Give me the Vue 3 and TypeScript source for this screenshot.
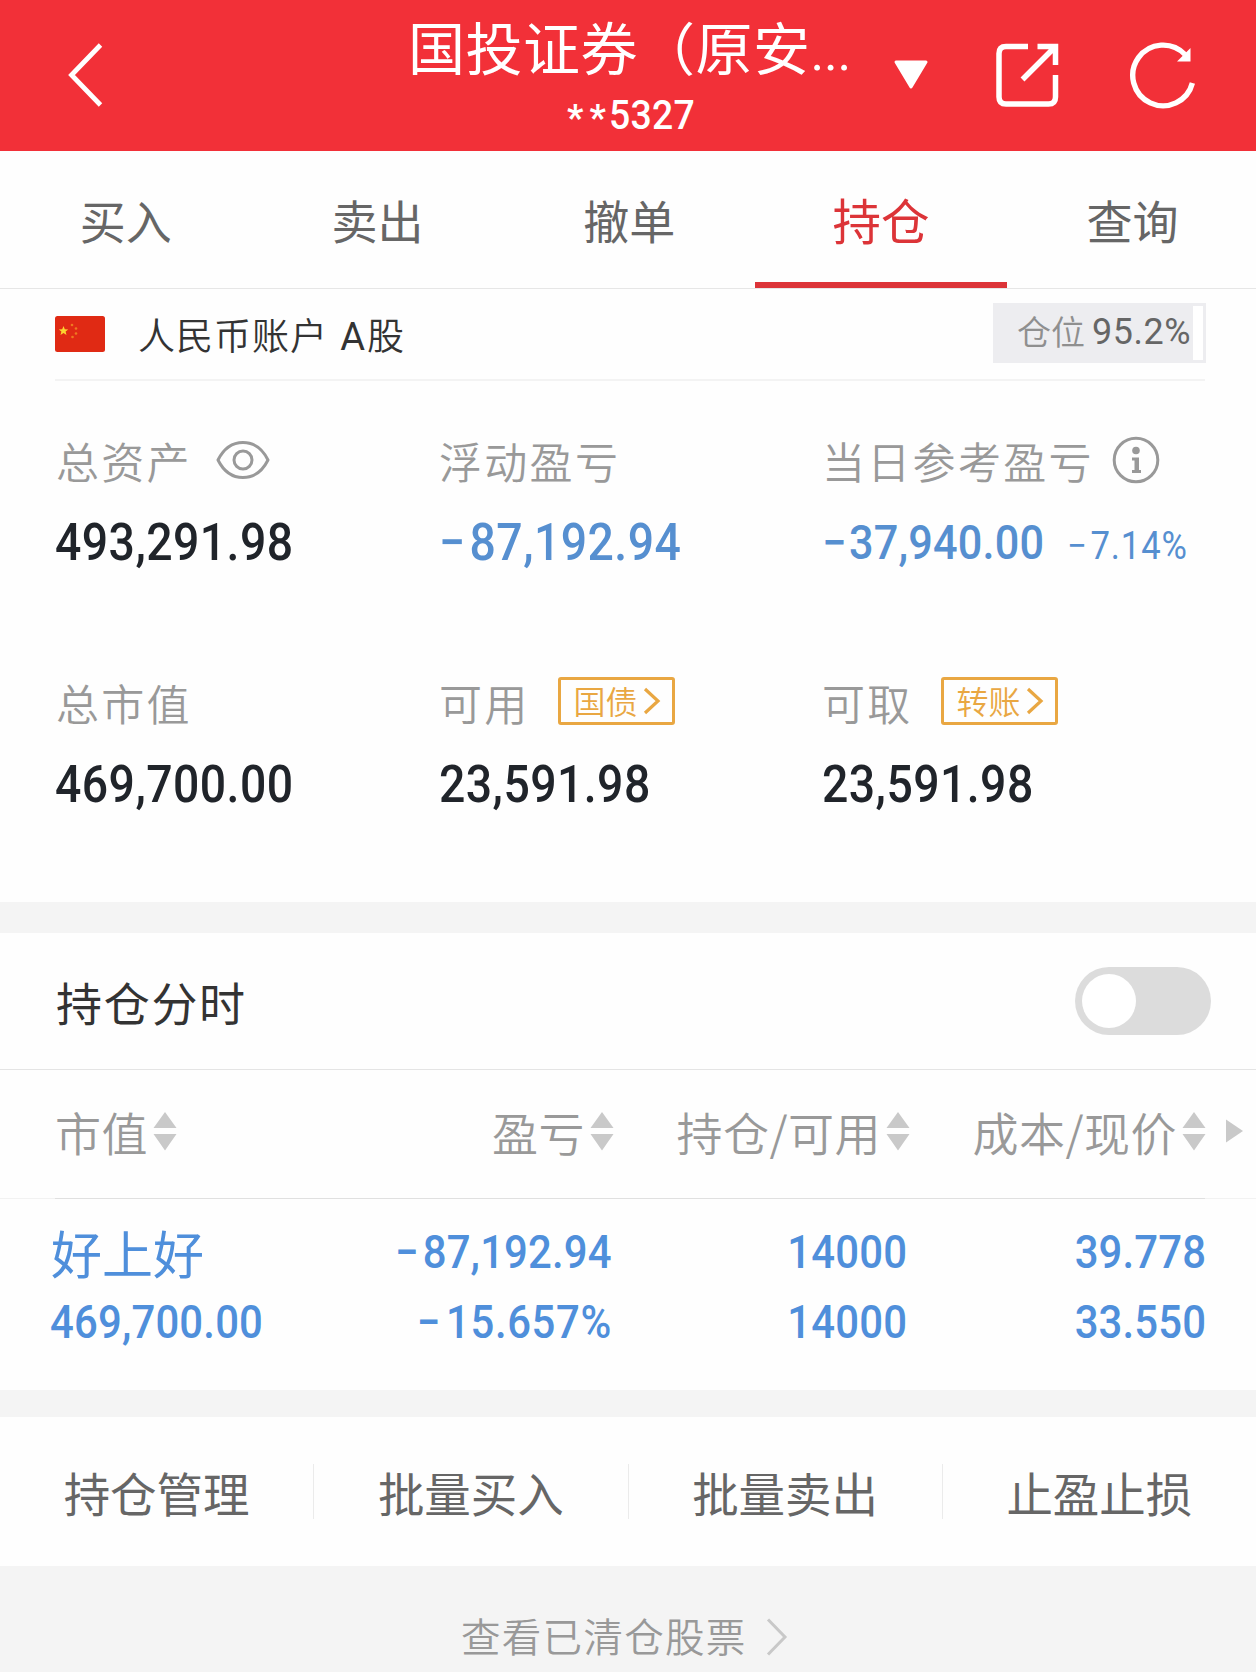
<script setup lang="ts">
import { ref } from 'vue'

interface Metric {
  label: string
  value: string
  loss?: boolean
  rate?: string
  icon?: 'eye' | 'info'
  tag?: string
}

const tabs = ['买入', '卖出', '撤单', '持仓', '查询']
const activeTab = ref('持仓')
const showTrend = ref(false)

const metrics: Metric[][] = [
  [
    { label: '总资产', value: '493,291.98', icon: 'eye' },
    { label: '浮动盈亏', value: '−87,192.94', loss: true },
    { label: '当日参考盈亏', value: '−37,940.00', loss: true, rate: '−7.14%', icon: 'info' },
  ],
  [
    { label: '总市值', value: '469,700.00' },
    { label: '可用', value: '23,591.98', tag: '国债' },
    { label: '可取', value: '23,591.98', tag: '转账' },
  ],
]

const columns = ['市值', '盈亏', '持仓/可用', '成本/现价']
const holdings = [
  {
    name: '好上好',
    marketValue: '469,700.00',
    cells: [
      ['−87,192.94', '−15.657%'],
      ['14000', '14000'],
      ['39.778', '33.550'],
    ],
  },
]
const actions = ['持仓管理', '批量买入', '批量卖出', '止盈止损']

const isNegative = (v: string) => v.startsWith('−')
const isPercent = (v: string) => v.endsWith('%')
</script>

<template>
  <main class="page">
    <header class="top">
      <svg class="back" width="40" height="70" viewBox="0 0 40 70">
        <path d="M35.500 5 6.500 35l29 30" fill="none" stroke="#fff" stroke-width="4.800" />
      </svg>
      <div class="title">
        <h1>国投证券（原安<span class="dots">...</span></h1>
        <p class="account-no"><i>*</i><i>*</i><span class="num">5327</span></p>
      </div>
      <svg class="caret" width="36" height="30" viewBox="0 0 36 30">
        <path d="M3 2h30L18 27Z" fill="#fff" stroke="#fff" stroke-width="3" stroke-linejoin="round" />
      </svg>
      <svg class="share" width="66" height="68" viewBox="0 0 66 68" fill="none" stroke="#fff" stroke-width="5.500">
        <path d="M34 5.500H12Q5 5.500 5 12.500v43.500q0 7 7 7h42.500q7 0 7-7V34M43.500 5.500h18v18.500M60.500 6.500 28.500 38.500" />
      </svg>
      <svg class="refresh" width="68" height="70" viewBox="0 0 68 70">
        <path d="M64.400 43A30.300 30.300 0 1 1 57 14.500" fill="none" stroke="#fff" stroke-width="5.400" />
        <path d="M62.500 8v13.500H49Z" fill="#fff" />
      </svg>
    </header>

    <nav class="tabs">
      <button v-for="tab in tabs" :key="tab" :class="{ active: tab === activeTab }" @click="activeTab = tab">
        <span>{{ tab }}</span>
      </button>
    </nav>

    <section class="summary">
      <div class="account">
        <svg class="flag" width="50" height="36" viewBox="0 0 50 36">
          <rect width="50" height="36" rx="2.500" fill="#e02a14" />
          <path d="m8.500 10 1.300 3.200 3.400.2-2.600 2.200.9 3.400-3-1.900-3 1.900.9-3.400-2.600-2.200 3.400-.2Z" fill="#fbd530" />
          <g fill="#ee7a20">
            <circle cx="17" cy="9" r="1.300" /><circle cx="21" cy="12.500" r="1.300" />
            <circle cx="21" cy="17.500" r="1.300" /><circle cx="17.500" cy="21" r="1.300" />
          </g>
        </svg>
        <span class="account-name">人民币账户 <b>A</b>股</span>
        <div class="ratio">
          <div class="ratio-fill"><span>仓位</span><span class="num">95.2%</span></div>
        </div>
      </div>

      <div v-for="(row, r) in metrics" :key="r" class="metrics">
        <div v-for="m in row" :key="m.label" class="metric">
          <div class="label">
            <span>{{ m.label }}</span>
            <svg v-if="m.icon === 'eye'" class="eye" width="54" height="40" viewBox="0 0 54 40" fill="none" stroke="#999" stroke-width="3">
              <path d="M2 20C8 8 17 2.500 27 2.500S46 8 52 20C46 32 37 37.500 27 37.500S8 32 2 20Z" stroke-linejoin="round" />
              <circle cx="27" cy="20" r="9" />
            </svg>
            <svg v-if="m.icon === 'info'" class="info" width="48" height="48" viewBox="0 0 48 48">
              <circle cx="24" cy="24" r="21.800" fill="none" stroke="#999" stroke-width="3" />
              <circle cx="24" cy="14.500" r="3.800" fill="#999" />
              <path d="M20 21.500h7v12.500H29v3h-9v-3h2.500v-9.500H20Z" fill="#999" />
            </svg>
            <a v-if="m.tag" class="tag">
              <span>{{ m.tag }}</span>
              <svg width="18" height="28" viewBox="0 0 18 28">
                <path d="m2 2 13 12L2 26" fill="none" stroke="#e9a742" stroke-width="3.200" />
              </svg>
            </a>
          </div>
          <div class="value" :class="{ loss: m.loss, compact: m.rate }">
            <span class="num">{{ m.value }}</span>
            <span v-if="m.rate" class="num rate">{{ m.rate }}</span>
          </div>
        </div>
      </div>
    </section>

    <section class="trend">
      <span>持仓分时</span>
      <button class="switch" :class="{ on: showTrend }" @click="showTrend = !showTrend"><i /></button>
    </section>

    <section class="table">
      <div class="row head">
        <div v-for="c in columns" :key="c" class="cell">
          <span>{{ c }}</span>
          <svg width="24" height="40" viewBox="0 0 24 40" fill="#c9c9c9">
            <path d="M12 1 23.500 17H.5ZM12 39.500.5 23h23Z" />
          </svg>
        </div>
        <svg class="more" width="17" height="24" viewBox="0 0 17 24">
          <path d="M0 .5 17 12 0 23.500Z" fill="#c9c9c9" />
        </svg>
      </div>
      <div v-for="h in holdings" :key="h.name" class="row body">
        <div class="cell">
          <span class="stock">{{ h.name }}</span>
          <span class="num">{{ h.marketValue }}</span>
        </div>
        <div v-for="(cell, i) in h.cells" :key="i" class="cell">
          <span
            v-for="(v, j) in cell"
            :key="j"
            class="num"
            :class="{ negative: isNegative(v), percent: isPercent(v) }"
          >{{ v }}</span>
        </div>
      </div>
    </section>

    <section class="actions">
      <button v-for="a in actions" :key="a"><span>{{ a }}</span></button>
    </section>

    <footer class="cleared">
      <span>查看已清仓股票</span>
      <svg width="22" height="40" viewBox="0 0 22 40">
        <path d="m2 2.500 17 17.500L2 37.500" fill="none" stroke="#c8c8c8" stroke-width="3" />
      </svg>
    </footer>
  </main>
</template>

<style>
body {
  margin: 0;
  background: #fff;
}
</style>

<style scoped>
.page {
  width: 1256px;
  height: 1672px;
  overflow: hidden;
  display: flex;
  flex-direction: column;
  background: #fefefe;
  font-family: 'Noto Sans CJK SC', sans-serif;
  font-weight: 350;
  color: #333;
  white-space: nowrap;
}
.page * {
  box-sizing: border-box;
  flex-shrink: 0;
}
svg {
  display: block;
}
button {
  border: 0;
  padding: 0;
  background: none;
  font: inherit;
  color: inherit;
}
.num {
  display: inline-block;
  font-family: Roboto, sans-serif;
  font-weight: 500;
  transform: scaleX(0.9);
  transform-origin: left center;
}

.top {
  height: 151px;
  display: flex;
  align-items: flex-start;
  background: #f23038;
  color: #fff;
}
.back {
  margin: 40px 0 0 65px;
}
.title {
  width: 440px;
  margin-left: 303px;
}
h1 {
  margin: 0;
  height: 88px;
  padding-top: 1px;
  font-size: 57px;
  line-height: 88px;
  letter-spacing: 0.5px;
  font-weight: 400;
}
.dots {
  font-family: Roboto, sans-serif;
  font-size: 52px;
  letter-spacing: -0.2px;
}
.account-no {
  margin: 0;
  height: 50px;
  display: flex;
  padding-left: 156px;
  font-size: 41.500px;
  line-height: 53px;
}
.account-no i {
  width: 22.500px;
  text-align: center;
  font: 700 36px/61px Roboto, sans-serif;
}
.account-no .num {
  letter-spacing: 0.3px;
}
.caret {
  margin: 60px 0 0 45px;
}
.share {
  margin: 41px 0 0 65px;
}
.refresh {
  margin: 40px 0 0 68px;
}

.tabs {
  height: 138px;
  display: flex;
  border-bottom: 1px solid #e6e6e6;
  font-size: 46px;
  font-weight: 400;
  letter-spacing: 1.700px;
  color: #666;
}
.tabs button {
  flex: 0 0 251.700px;
  line-height: 136px;
  border-bottom: 6px solid transparent;
}
.tabs .active {
  color: #dc3438;
  border-color: #dc3438;
  font-size: 48.500px;
}

.summary {
  height: 613px;
}
.account {
  height: 92px;
  margin: 0 51px 0 55px;
  border-bottom: 2px solid #f3f3f3;
  display: flex;
  align-items: flex-start;
}
.flag {
  margin-top: 27px;
}
.account-name {
  margin-left: 33px;
  font-size: 37px;
  line-height: 91px;
  letter-spacing: 1px;
}
.account-name b {
  margin: 0 1px 0 3px;
  font-family: Roboto, sans-serif;
  font-size: 38px;
  font-weight: 400;
}
.ratio {
  width: 213px;
  height: 60px;
  margin: 14px -1px 0 auto;
  padding: 3px;
  border: 0;
  background: linear-gradient(#fff, #fff) 200px 3px / 10px 54px no-repeat #ededf0;
}
.ratio-fill {
  display: flex;
  padding-left: 21px;
  font-size: 34px;
  line-height: 50px;
  color: #8f8f8f;
}
.ratio-fill .num {
  margin-left: 7px;
  font-size: 37px;
  font-weight: 400;
  letter-spacing: 0.6px;
  line-height: 51px;
  transform: scaleX(0.97);
  color: #666;
}

.metrics {
  height: 242px;
  margin-left: 55px;
  padding-top: 47px;
  display: grid;
  grid-template-columns: 384px 383px 1fr;
}
.label {
  height: 64px;
  display: flex;
  align-items: center;
  font-size: 43px;
  line-height: 64px;
  letter-spacing: 2.300px;
  color: #999;
}
.label > span {
  padding-bottom: 1px;
}
.metric:first-child .label {
  padding-left: 1px;
}
.eye {
  margin-left: 24px;
}
.info {
  margin-left: 18px;
}
.tag {
  width: 117px;
  height: 48px;
  margin: -2px 0 0 28px;
  padding-left: 13px;
  border: 3px solid #e9a742;
  border-radius: 3px;
  display: flex;
  align-items: center;
  gap: 5px;
  font-size: 32px;
  line-height: 40px;
  letter-spacing: 0;
  color: #e9a742;
}
.tag span {
  padding-bottom: 2px;
}
.value {
  height: 60px;
  margin-top: 21px;
  display: flex;
  align-items: baseline;
  font-size: 51.500px;
  line-height: 60px;
  color: #20242a;
}
.value .num {
  letter-spacing: 0.5px;
}
.value.loss {
  color: #568fd0;
}
.loss .num::first-letter {
  letter-spacing: 5px;
}
.value.compact {
  font-size: 48px;
}
.compact .num {
  letter-spacing: 0.2px;
}
.compact .num::first-letter {
  letter-spacing: 3px;
}
.compact .rate {
  margin-left: -2px;
  font-size: 38.500px;
  font-weight: 400;
  letter-spacing: 1px;
}
.compact .rate::first-letter {
  letter-spacing: 4px;
}

.trend {
  height: 168px;
  border-top: 31px solid #f4f4f4;
  border-bottom: 1px solid #e4e4e4;
  padding: 0 45px 0 56px;
  display: flex;
  align-items: center;
  justify-content: space-between;
  font-size: 46px;
  font-weight: 400;
  letter-spacing: 1.700px;
}
.switch {
  width: 136px;
  height: 68px;
  padding: 7px;
  border-radius: 34px;
  background: #dcdcdc;
  display: flex;
}
.switch i {
  width: 54px;
  height: 54px;
  border-radius: 50%;
  background: #fff;
}
.switch.on {
  justify-content: flex-end;
}

.row {
  display: grid;
  grid-template-columns: 284px 275px 296px 296px 1fr;
  padding-left: 55px;
}
.head {
  height: 129px;
  padding-bottom: 7px;
  align-items: center;
  font-size: 46px;
  letter-spacing: 0.5px;
  color: #999;
  background: linear-gradient(#e0e0e0, #e0e0e0) 55px 100% / 1150px 1px no-repeat, linear-gradient(#f2f2f2, #f2f2f2) 0 100% / 100% 1px no-repeat;
}
.head .cell {
  display: flex;
  align-items: center;
  justify-content: flex-end;
  gap: 5px;
}
.head .cell:first-child {
  justify-content: flex-start;
}
.more {
  margin-left: 20px;
}
.body {
  height: 191px;
  padding-top: 18px;
  color: #4f8fdb;
  font-size: 46.500px;
}
.body .cell {
  display: flex;
  flex-direction: column;
  align-items: flex-end;
  line-height: 70px;
}
.body .cell:first-child {
  align-items: flex-start;
  margin-left: -5px;
}
.body .cell:nth-child(2) {
  padding-right: 2px;
}
.body .cell:nth-child(3) {
  padding-right: 3px;
}
.body .num {
  transform-origin: right center;
  letter-spacing: 0.2px;
}
.body .negative::first-letter {
  letter-spacing: 4.500px;
}
.body .percent {
  letter-spacing: 0.7px;
}
.body .percent::first-letter {
  letter-spacing: 6.500px;
}
.body .cell:first-child .num {
  transform-origin: left center;
}
.stock {
  padding-left: 1px;
  font-size: 51px;
  font-weight: 400;
}

.actions {
  height: 176px;
  border-top: 27px solid #f4f4f4;
  display: flex;
  align-items: center;
  font-size: 46.500px;
  font-weight: 400;
  letter-spacing: 1.500px;
  color: #666;
}
.actions button {
  flex: 1;
  height: 55px;
  line-height: 53px;
}
.actions button + button {
  border-left: 1px solid #ebebeb;
}

.cleared {
  flex: 1;
  padding: 51px 0 0 461px;
  display: flex;
  align-items: flex-start;
  gap: 19px;
  background: #f4f4f4;
  font-size: 39.500px;
  line-height: 36px;
  letter-spacing: 1.300px;
  color: #999;
}
</style>
